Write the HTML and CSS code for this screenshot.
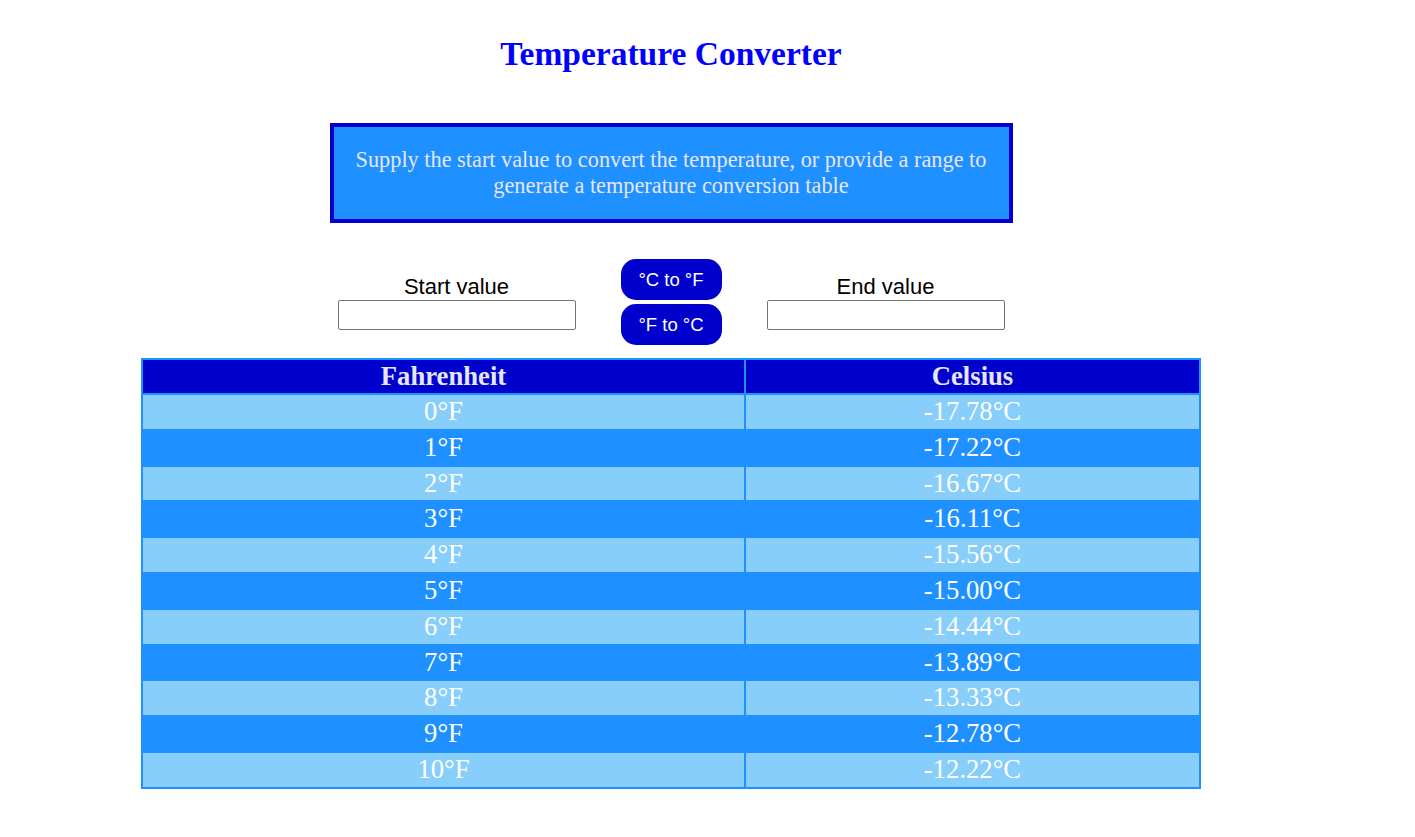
FILE: index.html
```html
<!DOCTYPE html>
<html lang="en">
<head>
<meta charset="utf-8">
<title>Temperature Converter</title>
<link rel="stylesheet" href="styles.css">
</head>
<body>
<div class="page">
  <h1 class="title">Temperature Converter</h1>
  <div class="info">Supply the start value to convert the temperature, or provide a range to generate a temperature conversion table</div>
  <div class="controls">
    <div class="field">
      <label class="field-label" for="start">Start value</label>
      <input class="field-input" id="start" type="text">
    </div>
    <div class="buttons">
      <button class="btn" type="button">°C to °F</button>
      <button class="btn" type="button">°F to °C</button>
    </div>
    <div class="field">
      <label class="field-label" for="end">End value</label>
      <input class="field-input" id="end" type="text">
    </div>
  </div>
  <table class="conv">
    <colgroup><col class="col-f"><col class="col-c"></colgroup>
    <thead>
      <tr><th>Fahrenheit</th><th>Celsius</th></tr>
    </thead>
    <tbody>
      <tr><td>0°F</td><td>-17.78°C</td></tr>
      <tr><td>1°F</td><td>-17.22°C</td></tr>
      <tr><td>2°F</td><td>-16.67°C</td></tr>
      <tr><td>3°F</td><td>-16.11°C</td></tr>
      <tr><td>4°F</td><td>-15.56°C</td></tr>
      <tr><td>5°F</td><td>-15.00°C</td></tr>
      <tr><td>6°F</td><td>-14.44°C</td></tr>
      <tr><td>7°F</td><td>-13.89°C</td></tr>
      <tr><td>8°F</td><td>-13.33°C</td></tr>
      <tr><td>9°F</td><td>-12.78°C</td></tr>
      <tr><td>10°F</td><td>-12.22°C</td></tr>
    </tbody>
  </table>
</div>
</body>
</html>
```
FILE: styles.css
```css
html, body {
  margin: 0;
  padding: 0;
  background: #ffffff;
}

body {
  font-family: "Liberation Serif", "Times New Roman", serif;
}

.page {
  width: 1060px;
  margin-left: 141px;
  padding-bottom: 40px;
}

.title {
  margin: 34px 0 0;
  font-size: 33.5px;
  line-height: 39px;
  font-weight: bold;
  color: #0000ff;
  text-align: center;
}

.info {
  box-sizing: border-box;
  width: 683px;
  margin: 50px auto 0;
  padding: 20px 12px;
  border: 4px solid #0000cd;
  background: #1e90ff;
  color: #e6e6fa;
  font-size: 22.3px;
  line-height: 26px;
  text-align: center;
}

.controls {
  display: flex;
  justify-content: center;
  align-items: center;
  gap: 45px;
  margin-top: 36px;
}

.field {
  display: flex;
  flex-direction: column;
  align-items: center;
}

.field-label {
  font-family: "Liberation Sans", Arial, sans-serif;
  font-size: 22px;
  line-height: 26px;
  color: #000000;
}

.field-input {
  box-sizing: border-box;
  width: 238px;
  height: 30px;
  margin: 0;
  border: 1px solid #767676;
  border-radius: 2px;
  background: #ffffff;
}

.buttons {
  display: flex;
  flex-direction: column;
  gap: 4px;
}

.btn {
  box-sizing: border-box;
  width: 101px;
  height: 41px;
  margin: 0;
  padding: 0;
  border: none;
  border-radius: 15px;
  background: #0000cd;
  color: #ffffff;
  font-family: "Liberation Sans", Arial, sans-serif;
  font-size: 18.5px;
}

.conv {
  width: 100%;
  margin-top: 13px;
  border-collapse: collapse;
  border: 2px solid #1e90ff;
}

.col-f {
  width: 603px;
}

.conv th,
.conv td {
  border: 2px solid #1e90ff;
  padding: 0;
  text-align: center;
  font-size: 26.67px;
}

.conv th {
  background: #0000cd;
  color: #e6e6fa;
  font-weight: bold;
  line-height: 33px;
}

.conv td {
  color: #ffffff;
  line-height: 33.8px;
}

.conv tbody tr:nth-child(odd) td {
  background: #87cefa;
}

.conv tbody tr:nth-child(even) td {
  background: #1e90ff;
}
```
